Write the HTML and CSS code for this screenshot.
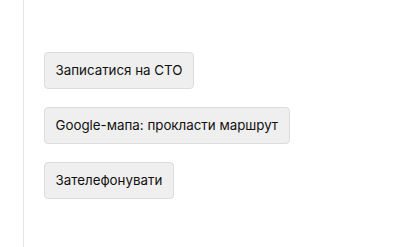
FILE: index.html
```html
<!DOCTYPE html>
<html lang="uk">
<head>
<meta charset="utf-8">
<link rel="stylesheet" href="styles.css">
</head>
<body>
<div class="page">
  <div class="rail"></div>
  <div class="actions">
    <button class="btn">Записатися на СТО</button>
    <button class="btn">Google-мапа: прокласти маршрут</button>
    <button class="btn">Зателефонувати</button>
  </div>
</div>
</body>
</html>
```
FILE: styles.css
```css
html, body { margin: 0; padding: 0; background: #fff; }
.page { display: flex; height: 247px; }
.rail { width: 23px; border-right: 1px solid #e6e6e6; flex: none; }
.actions {
  display: flex; flex-direction: column; align-items: flex-start;
  gap: 18px; padding: 52px 0 0 20px;
}
.btn {
  font-family: Inter, "Noto Sans", sans-serif; font-size: 13.333px; line-height: 17px;
  color: #111; background: #efefef; border: 1px solid #dcdcdc; border-radius: 4px;
  padding: 9px 10.5px; margin: 0; height: 37px;
}
```
